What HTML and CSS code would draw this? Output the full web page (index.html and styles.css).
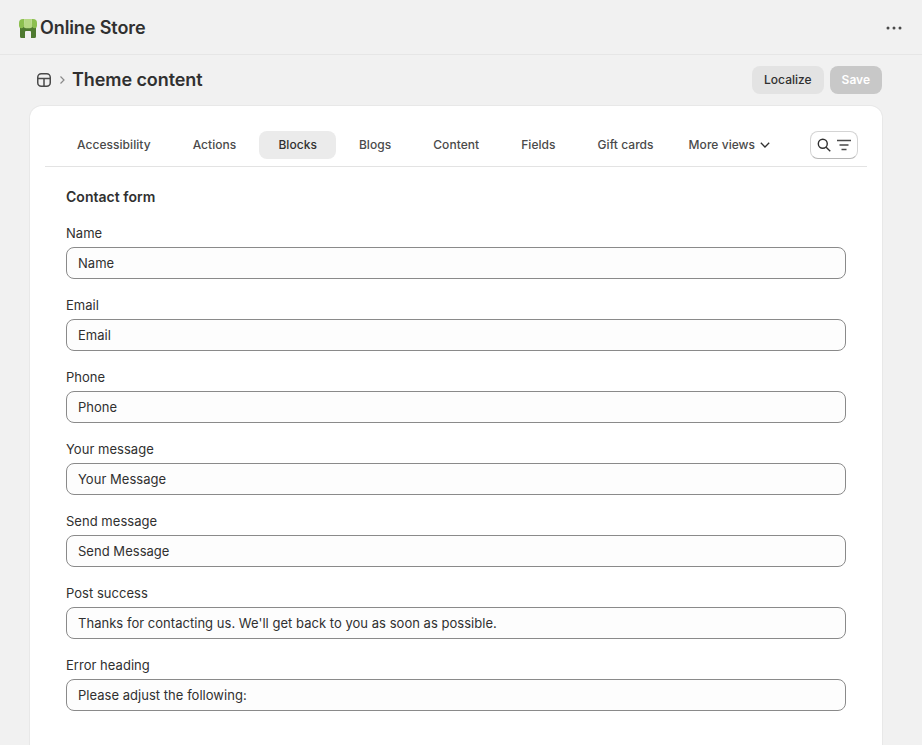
FILE: index.html
```html
<!DOCTYPE html>
<html lang="en">
<head>
    <meta charset="UTF-8">
    <meta name="viewport" content="width=device-width, initial-scale=1.0">
    <title>Theme content</title>
    <link rel="stylesheet" href="styles.css">
</head>
<body>
    <header class="app-bar">
        <div class="app-title">
            <svg class="app-logo" width="18" height="19" viewBox="0 0 18 19">
                <path d="M1 6h16v11.500a1.500 1.500 0 0 1-1.500 1.500H12v-6a1 1 0 0 0-1-1H7a1 1 0 0 0-1 1v6H2.500A1.500 1.500 0 0 1 1 17.500z" fill="#4f7a30"/>
                <path d="M4 0h1.500L4.800 7.500Q4.500 9.200 2.600 9.200 0 9.200 0 7V4a4 4 0 0 1 4-4z" fill="#8cbf4f"/>
                <path d="M12.500 0H14a4 4 0 0 1 4 4v3q0 2.200-2.600 2.200-1.900 0-2.200-1.700z" fill="#8cbf4f"/>
                <path d="M5.500 0h7l.7 7.500Q13.200 9.200 11 9.200H7Q4.800 9.200 4.800 7.500z" fill="#b6d884"/>
            </svg>
            <span>Online Store</span>
        </div>
        <button class="dots-btn" aria-label="More actions">
            <svg width="16" height="4" viewBox="0 0 16 4" fill="#4a4a4a">
                <circle cx="2" cy="2" r="1.500"/><circle cx="8" cy="2" r="1.500"/><circle cx="14" cy="2" r="1.500"/>
            </svg>
        </button>
    </header>

    <main class="page">
        <div class="page-head">
            <div class="crumbs">
                <svg width="16" height="16" viewBox="0 0 16 16" fill="none" stroke="#4a4a4a" stroke-width="1.500">
                    <rect x="1.750" y="1.750" width="12.500" height="12.500" rx="3.500"/>
                    <path d="M2 6.500h12M8 6.500v7.500"/>
                </svg>
                <svg class="crumb-sep" width="8" height="10" viewBox="0 0 8 10" fill="none" stroke="#8a8a8a" stroke-width="1.200">
                    <path d="M2.500 1.500 6 5 2.500 8.500"/>
                </svg>
                <h1>Theme content</h1>
            </div>
            <div class="head-actions">
                <button class="btn btn-light">Localize</button>
                <button class="btn btn-disabled">Save</button>
            </div>
        </div>

        <section class="card">
            <div class="tabs">
                <div class="tab-list">
                    <a class="tab">Accessibility</a>
                    <a class="tab">Actions</a>
                    <a class="tab active">Blocks</a>
                    <a class="tab">Blogs</a>
                    <a class="tab">Content</a>
                    <a class="tab">Fields</a>
                    <a class="tab">Gift cards</a>
                    <a class="tab tab-more">More views
                        <svg width="10" height="6" viewBox="0 0 10 6" fill="none" stroke="#303030" stroke-width="1.300">
                            <path d="M.8.8 5 5 9.200.8"/>
                        </svg>
                    </a>
                </div>
                <button class="search-btn" aria-label="Search and filter">
                    <svg width="14" height="14" viewBox="0 0 15 15" fill="none" stroke="#303030" stroke-width="1.500">
                        <circle cx="6.200" cy="6.200" r="4.800"/><path d="m9.800 9.800 4.400 4.400"/>
                    </svg>
                    <svg width="14" height="12" viewBox="0 0 14 12" fill="none" stroke="#4a4a4a" stroke-width="1.500">
                        <path d="M0 1.500h14M2.500 6h9M4.500 10.500h5"/>
                    </svg>
                </button>
            </div>

            <form class="form">
                <h2>Contact form</h2>
                <div class="field">
                    <label>Name</label>
                    <input type="text" value="Name">
                </div>
                <div class="field">
                    <label>Email</label>
                    <input type="text" value="Email">
                </div>
                <div class="field">
                    <label>Phone</label>
                    <input type="text" value="Phone">
                </div>
                <div class="field">
                    <label>Your message</label>
                    <input type="text" value="Your Message">
                </div>
                <div class="field">
                    <label>Send message</label>
                    <input type="text" value="Send Message">
                </div>
                <div class="field">
                    <label>Post success</label>
                    <input type="text" value="Thanks for contacting us. We'll get back to you as soon as possible.">
                </div>
                <div class="field">
                    <label>Error heading</label>
                    <input type="text" value="Please adjust the following:">
                </div>
            </form>
        </section>
    </main>
</body>
</html>
```

FILE: styles.css
```css
* {
    box-sizing: border-box;
}
body {
    margin: 0;
    height: 745px;
    overflow: hidden;
    font-family: Inter, "Liberation Sans", sans-serif;
    font-size: 13px;
    line-height: 20px;
    letter-spacing: 0.03px;
    color: #303030;
    background-color: #f1f1f1;
}
.app-bar {
    height: 55px;
    padding: 2px 20px 0 19px;
    display: flex;
    align-items: center;
    justify-content: space-between;
    border-bottom: 1px solid #e6e6e6;
}
.app-title {
    display: flex;
    align-items: center;
    gap: 3px;
    font-size: 18px;
    font-weight: 600;
    letter-spacing: -0.1px;
}
.app-logo {
    display: block;
}
.dots-btn {
    display: flex;
    padding: 0;
    border: none;
    background: none;
}
.page {
    padding: 11px 40px 0 30px;
}
.page-head {
    height: 28px;
    margin-bottom: 12px;
    display: flex;
    align-items: center;
    justify-content: space-between;
}
.crumbs {
    display: flex;
    align-items: center;
    padding-left: 6px;
}
.crumb-sep {
    margin: 0 6px 0 6px;
}
h1 {
    margin: 0;
    font-size: 18px;
    line-height: 28px;
    font-weight: 600;
    letter-spacing: -0.08px;
}
.head-actions {
    display: flex;
    gap: 6px;
}
.btn {
    height: 28px;
    padding: 0 12px;
    border: none;
    border-radius: 8px;
    font: 500 12px/20px Inter, "Liberation Sans", sans-serif;
}
.btn-light {
    background: #e3e3e3;
    color: #303030;
}
.btn-disabled {
    background: #c8c8c8;
    color: #fff;
    font-weight: 600;
}
.card {
    height: 639px;
    padding: 0 15px;
    background: #fff;
    border-radius: 12px 12px 0 0;
    box-shadow: 0 0 0 1px #e8e8e8;
}
.tabs {
    height: 61px;
    padding: 25px 9px 0 13px;
    display: flex;
    align-items: flex-start;
    justify-content: space-between;
    border-bottom: 1px solid #e3e3e3;
}
.tab-list {
    display: flex;
    gap: 4px;
}
.tab {
    height: 28px;
    padding: 0 19px;
    display: flex;
    align-items: center;
    gap: 5px;
    border-radius: 8px;
    font-size: 12px;
    font-weight: 500;
    letter-spacing: 0.05px;
    color: #4a4a4a;
}
.tab.active {
    background: #ebebeb;
    color: #303030;
}
.tab-more {
    padding: 0 12px;
}
.search-btn {
    width: 48px;
    height: 28px;
    padding: 0;
    display: flex;
    align-items: center;
    justify-content: center;
    gap: 6px;
    background: #fff;
    border: 1px solid #d4d4d4;
    border-bottom-color: #b5b5b5;
    border-radius: 8px;
}
.form {
    padding: 20px 21px 0;
}
h2 {
    margin: 0 0 16px;
    font-size: 14px;
    line-height: 20px;
    font-weight: 600;
}
.field {
    margin-bottom: 16px;
}
.field label {
    display: block;
    margin-bottom: 4px;
}
.field input {
    display: block;
    width: 100%;
    height: 32px;
    padding: 0 11px;
    background: #fdfdfd;
    border: 1px solid #8a8a8a;
    border-radius: 8px;
    font: 400 13px/20px Inter, "Liberation Sans", sans-serif;
    letter-spacing: 0.03px;
    color: #303030;
}
```
